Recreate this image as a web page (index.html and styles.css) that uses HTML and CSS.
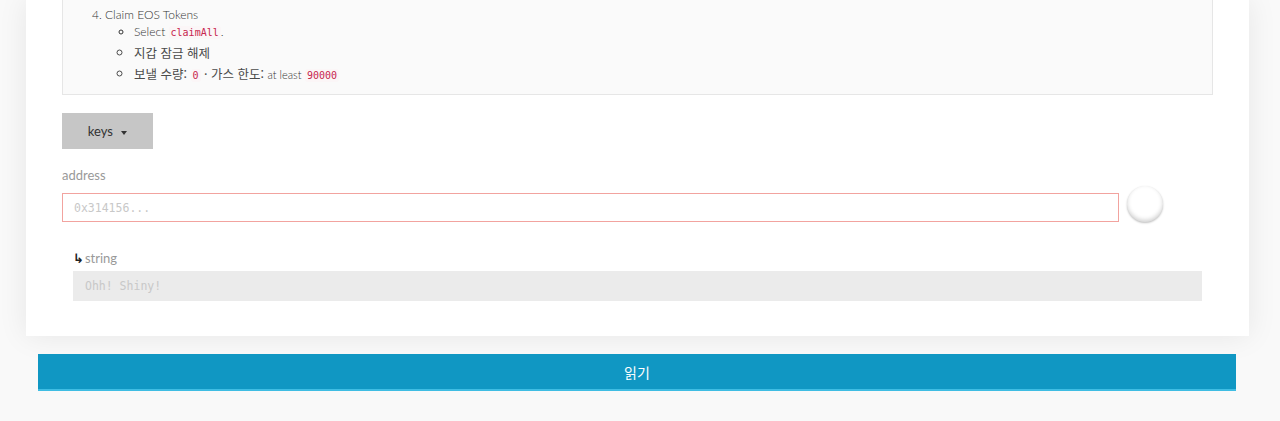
FILE: index.html
```html
<!DOCTYPE html>
<html lang="ko">
<head>
  <meta charset="UTF-8" />
  <meta name="viewport" content="width=device-width, initial-scale=1.0" />
  <title>Contract - Read</title>
  <link rel="stylesheet" href="styles.css">
</head>
<body>
  <div class="card">
    <div class="steps">
      <ol start="4">
        <li>Claim EOS Tokens
          <ul>
            <li>Select <code>claimAll</code>.</li>
            <li class="ko">지갑 잠금 해제</li>
            <li class="ko">보낼 수량: <code>0</code> · 가스 한도: <span class="lat">at least</span> <code>90000</code></li>
          </ul>
        </li>
      </ol>
    </div>

    <button class="dropdown">keys <span class="caret"></span></button>

    <label class="field-label">address</label>
    <div class="address-row">
      <input type="text" class="address" placeholder="0x314156..." />
      <span class="identicon"></span>
    </div>

    <div class="output">
      <div class="output-label"><span class="arrow">↳</span>string</div>
      <input type="text" class="output-value" placeholder="Ohh! Shiny!" readonly />
    </div>
  </div>

  <button class="read-btn">읽기</button>
</body>
</html>
```

FILE: styles.css
```css
body {
  margin: 0;
  background-color: #f9f9f9;
  font-family: Lato, 'Noto Sans CJK KR', sans-serif;
  color: #333;
  height: 421px;
  overflow: hidden;
}

.card {
  background: #fff;
  width: 1151px;
  margin-left: 26px;
  padding: 0 36px 35px 36px;
  box-shadow: 0 0 28px rgba(0, 0, 0, 0.08);
}

.steps {
  background: #fafafa;
  border: 1px solid #e6e6e6;
  border-top: none;
  padding: 7px 0 8px 0;
}

.steps ol {
  margin: 0;
  padding-left: 42px;
  font-size: 12px;
  line-height: 16px;
  font-weight: 300;
  color: #333;
}

.steps ul {
  margin: 0;
  padding-left: 29px;
  list-style: circle;
}

.steps ul li {
  line-height: 21px;
}

.steps ul li:first-child {
  line-height: 18px;
}

.ko {
  font-family: 'Noto Sans CJK KR', sans-serif;
  font-weight: 400;
  font-size: 12.5px;
  color: #4a4a4a;
}

.lat {
  font-family: Lato, sans-serif;
  font-weight: 300;
  font-size: 11px;
  color: #333;
}

code {
  font-family: 'DejaVu Sans Mono', monospace;
  font-size: 10px;
  font-weight: 400;
  color: #c7254e;
  background: #fbf6f7;
  padding: 1px 2px;
  border-radius: 3px;
}

.dropdown {
  display: block;
  margin-top: 18px;
  width: 91px;
  height: 36px;
  border: none;
  background: #c6c6c6;
  font-family: Lato, sans-serif;
  font-size: 13px;
  color: #333;
  cursor: pointer;
}

.caret {
  display: inline-block;
  width: 0;
  height: 0;
  margin-left: 5px;
  vertical-align: middle;
  border-top: 4px solid #333;
  border-left: 3px solid transparent;
  border-right: 3px solid transparent;
}

.field-label {
  display: block;
  margin-top: 18px;
  font-size: 13px;
  color: #999;
}

.address-row {
  display: flex;
  align-items: flex-start;
  gap: 8px;
  margin-top: 3px;
  padding-right: 50px;
}

.address {
  flex: 1;
  height: 29px;
  margin-top: 7px;
  box-sizing: border-box;
  border: 1px solid #f2a39f;
  padding: 0 11px;
  font-family: 'DejaVu Sans Mono', monospace;
  font-size: 11.5px;
  outline: none;
}

.address::placeholder {
  color: #c8c8c8;
}

.identicon {
  width: 36px;
  height: 36px;
  border-radius: 50%;
  background: #fff;
  box-shadow: inset 0 -2px 4px rgba(0, 0, 0, 0.18), 0 1px 2px rgba(0, 0, 0, 0.25);
}

.output {
  margin: 28px 11px 0 11px;
}

.output-label {
  font-size: 13px;
  color: #999;
  line-height: 16px;
}

.arrow {
  color: #222;
  font-weight: 700;
  font-family: 'DejaVu Sans', sans-serif;
  font-size: 13px;
  margin-right: 1px;
}

.output-value {
  display: block;
  width: 100%;
  height: 30px;
  box-sizing: border-box;
  margin-top: 4px;
  border: none;
  background: #ebebeb;
  padding: 0 12px;
  font-family: 'DejaVu Sans Mono', monospace;
  font-size: 11.5px;
  outline: none;
}

.output-value::placeholder {
  color: #c8c8c8;
}

.read-btn {
  display: block;
  margin: 18px 0 0 38px;
  width: 1198px;
  height: 37px;
  border: none;
  border-bottom: 2px solid #3fbde3;
  background: #1097c3;
  color: #fff;
  font-family: 'Noto Sans CJK KR', sans-serif;
  font-size: 14px;
  cursor: pointer;
}
```
